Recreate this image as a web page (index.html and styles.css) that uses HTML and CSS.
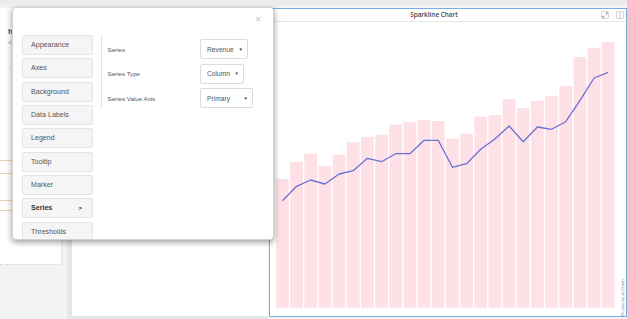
FILE: index.html
```html
<!DOCTYPE html>
<html>
<head>
<meta charset="utf-8">
<link rel="stylesheet" href="styles.css">
</head>
<body>
<div class="page">
  <div class="dash">
    <div class="left">
      <div class="left-h">h</div>
      <div class="left-lt">&lt;</div>
      <div class="left-dot">-</div>
      <div class="tan t1"></div>
      <div class="tan t2"></div>
      <div class="tan t3"></div>
      <div class="tan t4"></div>
    </div>
    <div class="mid"></div>
    <div class="chart">
      <div class="chart-head">
        <div class="chart-title">Sparkline Chart</div>
        <div class="tools">
          <span class="tool"><svg width="6" height="6" viewBox="0 0 6 6"><path d="M0.8 5.2 L2.4 3.6 M0.8 5.2 L0.8 3.9 M0.8 5.2 L2.1 5.2 M5.2 0.8 L3.6 2.4 M5.2 0.8 L3.9 0.8 M5.2 0.8 L5.2 2.1" stroke="#777" stroke-width="0.7" fill="none"/></svg></span>
          <span class="tool"><svg width="6" height="6" viewBox="0 0 6 6"><circle cx="3" cy="1" r="0.55" fill="#777"/><circle cx="3" cy="3" r="0.55" fill="#777"/><circle cx="3" cy="5" r="0.55" fill="#777"/></svg></span>
        </div>
      </div>
      <svg class="plot" width="356" height="294" viewBox="272 22 356 294">
        <g fill="#fee1e7">
          <rect x="278.0" y="179.0" width="12.8" height="128.7"/>
          <rect x="292.2" y="162.0" width="12.8" height="145.7"/>
          <rect x="306.3" y="153.7" width="12.8" height="154.0"/>
          <rect x="320.5" y="166.0" width="12.8" height="141.7"/>
          <rect x="334.7" y="154.7" width="12.8" height="153.0"/>
          <rect x="348.8" y="142.0" width="12.8" height="165.7"/>
          <rect x="363.0" y="137.0" width="12.8" height="170.7"/>
          <rect x="377.2" y="134.7" width="12.8" height="173.0"/>
          <rect x="391.3" y="124.7" width="12.8" height="183.0"/>
          <rect x="405.5" y="122.0" width="12.8" height="185.7"/>
          <rect x="419.7" y="119.7" width="12.8" height="188.0"/>
          <rect x="433.8" y="121.0" width="12.8" height="186.7"/>
          <rect x="448.0" y="138.7" width="12.8" height="169.0"/>
          <rect x="462.2" y="133.7" width="12.8" height="174.0"/>
          <rect x="476.3" y="116.7" width="12.8" height="191.0"/>
          <rect x="490.5" y="115.0" width="12.8" height="192.7"/>
          <rect x="504.7" y="99.0" width="12.8" height="208.7"/>
          <rect x="518.8" y="108.0" width="12.8" height="199.7"/>
          <rect x="533.0" y="101.0" width="12.8" height="206.7"/>
          <rect x="547.2" y="95.7" width="12.8" height="212.0"/>
          <rect x="561.3" y="86.0" width="12.8" height="221.7"/>
          <rect x="575.5" y="57.0" width="12.8" height="250.7"/>
          <rect x="589.7" y="48.0" width="12.8" height="259.7"/>
          <rect x="603.8" y="42.0" width="12.8" height="265.7"/>
        </g>
        <polyline fill="none" stroke="#6a6fd6" stroke-width="1.3" stroke-linejoin="round" points="284.4,200.7 298.6,186.3 312.7,180 326.9,184 341.1,174 355.2,170.7 369.4,158.3 383.6,161.7 397.7,153.7 411.9,153.7 426.1,140.3 440.2,140.3 454.4,167.3 468.6,163.7 482.7,149.3 496.9,139 511.1,126 525.2,141.7 539.4,127 553.6,129.3 567.7,121.7 581.9,100.7 596.1,78 610.2,72.3"/>
      </svg>
      <div class="credit"><span class="credit-a">JS chart</span> <span class="credit-b">by amCharts</span></div>
    </div>
  </div>

  <div class="modal">
    <div class="close">×</div>
    <div class="modal-body">
      <div class="side">
        <div class="side-btn">Appearance</div>
        <div class="side-btn">Axes</div>
        <div class="side-btn">Background</div>
        <div class="side-btn">Data Labels</div>
        <div class="side-btn">Legend</div>
        <div class="side-btn">Tooltip</div>
        <div class="side-btn">Marker</div>
        <div class="side-btn active"><span>Series</span><span class="chev">&gt;</span></div>
        <div class="side-btn">Thresholds</div>
      </div>
      <div class="divider"></div>
      <div class="form">
        <div class="row"><div class="label">Series</div><div class="select w1"><span>Revenue</span><span class="arrow">▼</span></div></div>
        <div class="row"><div class="label">Series Type</div><div class="select w2"><span>Column</span><span class="arrow">▼</span></div></div>
        <div class="row"><div class="label">Series Value Axis</div><div class="select w3"><span>Primary</span><span class="arrow">▼</span></div></div>
      </div>
    </div>
  </div>
</div>
</body>
</html>
```

FILE: styles.css
```css
* { box-sizing: border-box; }
html, body { margin: 0; padding: 0; }
body { font-family: "Liberation Sans", Arial, sans-serif; }

.page {
  position: relative;
  width: 627px;
  height: 319px;
  overflow: hidden;
  background: #f3f3f3;
  border-top: 5px solid #ececec;
}

.dash {
  display: flex;
  align-items: flex-start;
  padding-top: 3px;
}

.left {
  position: relative;
  width: 62px;
  height: 257px;
  background: #fff;
  border-right: 1px dotted #cfcfcf;
  border-bottom: 1px dotted #cfcfcf;
}
.left-h { position: absolute; left: 8px; top: 19px; font-size: 8px; font-weight: bold; color: #3a4a6a; }
.left-lt { position: absolute; left: 8px; top: 31px; font-size: 7px; color: #999; }
.left-dot { position: absolute; left: 9px; top: 56px; font-size: 6px; color: #aaa; }
.tan { position: absolute; left: 0; width: 12px; height: 1px; background: #ecd3b0; }
.t1 { top: 152px; }
.t2 { top: 165px; }
.t3 { top: 192px; }
.t4 { top: 202px; }

.mid {
  margin-left: 5px;
  width: 203px;
  height: 311px;
  background: #fff;
  border-left: 5px solid #e6e6e6;
  border-bottom: 3px solid #e6e6e6;
}

.chart {
  position: relative;
  margin-left: 1px;
  width: 358px;
  height: 309px;
  background: #fff;
  border: 1px solid #78ace2;
}

.chart-head {
  display: flex;
  height: 13px;
  border-bottom: 1px solid #e6e6e6;
}
.chart-title {
  flex: 1;
  text-align: center;
  font-family: "Open Sans", sans-serif;
  font-weight: 600;
  font-size: 6.4px;
  line-height: 12px;
  color: #444;
}
.tools {
  display: flex;
  gap: 7px;
  width: 28px;
  padding: 2px 0 0 3px;
}
.tool {
  display: flex;
  align-items: center;
  justify-content: center;
  width: 8px;
  height: 8px;
  border: 1px solid #d5d5d5;
  border-radius: 1px;
  background: #fff;
}

.plot { display: block; }

.credit {
  position: absolute;
  left: 351px;
  top: 236px;
  height: 72px;
  writing-mode: vertical-rl;
  transform: rotate(180deg);
  font-size: 4px;
  line-height: 4px;
  white-space: nowrap;
}
.credit-a { color: #7a93c9; }
.credit-b { color: #888; }

.modal {
  position: absolute;
  left: 12px;
  top: 2px;
  width: 262px;
  height: 233px;
  background: #fff;
  border: 1px solid #d2d2d2;
  border-radius: 4px;
  box-shadow: 0 2px 6px rgba(0, 0, 0, 0.42);
  overflow: hidden;
}
.close {
  position: absolute;
  right: 12px;
  top: 7px;
  font-size: 10px;
  line-height: 10px;
  color: #c4c4c4;
}
.modal-body {
  display: flex;
  align-items: flex-start;
  padding: 27px 0 0 9px;
}
.side {
  display: flex;
  flex-direction: column;
  gap: 3.33px;
  width: 71px;
}
.side-btn {
  display: flex;
  align-items: center;
  justify-content: space-between;
  height: 20px;
  padding: 0 10px 0 8px;
  background: #f5f5f5;
  border: 1px solid #e4e4e4;
  border-radius: 2px;
  font-size: 7.1px;
  color: #555;
}
.side-btn.active { color: #333; font-weight: bold; }
.chev { font-size: 6px; }

.divider {
  margin-left: 8px;
  width: 0;
  height: 73px;
  border-left: 1px solid #e2e2e2;
}
.form {
  display: flex;
  flex-direction: column;
  gap: 4.5px;
  padding: 4px 0 0 5.5px;
}
.row {
  display: flex;
  align-items: center;
  height: 20px;
}
.label {
  width: 92.5px;
  font-size: 6.2px;
  color: #555;
}
.select {
  display: flex;
  align-items: center;
  justify-content: space-between;
  height: 20px;
  padding: 0 4px 0 6px;
  border: 1px solid #dcdcdc;
  border-radius: 2px;
  font-size: 6.7px;
  color: #555;
}
.w1 { width: 48px; }
.w2 { width: 44px; }
.w3 { width: 53px; }
.arrow { font-size: 4.5px; color: #444; }
```
